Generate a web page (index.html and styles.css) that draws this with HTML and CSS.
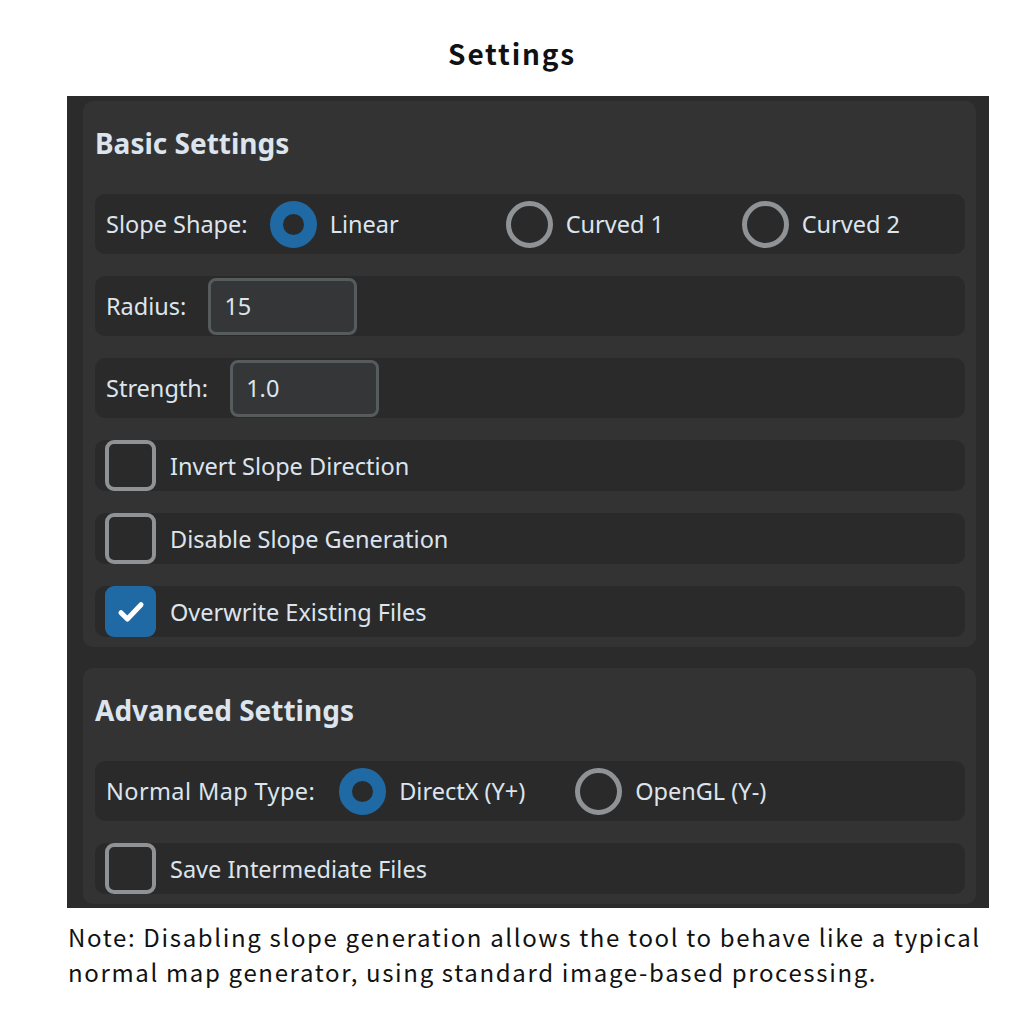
FILE: index.html
```html
<!DOCTYPE html>
<html lang="en">
<head>
<meta charset="UTF-8" />
<title>Settings</title>
<link rel="stylesheet" href="styles.css">
</head>
<body>
<h1 class="page-title">Settings</h1>

<div class="panel">
  <section class="group">
    <h2 class="group-title">Basic Settings</h2>

    <div class="row row-tall">
      <span class="label">Slope Shape:</span>
      <label class="radio checked"><span class="dot"></span>Linear</label>
      <label class="radio"><span class="dot"></span>Curved 1</label>
      <label class="radio"><span class="dot"></span>Curved 2</label>
    </div>

    <div class="row row-tall">
      <span class="label">Radius:</span>
      <div class="entry">15</div>
    </div>

    <div class="row row-tall">
      <span class="label">Strength:</span>
      <div class="entry">1.0</div>
    </div>

    <div class="row row-check">
      <span class="box"></span>
      <span class="label">Invert Slope Direction</span>
    </div>

    <div class="row row-check">
      <span class="box"></span>
      <span class="label">Disable Slope Generation</span>
    </div>

    <div class="row row-check">
      <span class="box checked">
        <svg viewBox="0 0 24 24" width="32" height="32"><path d="M4.5 12.5l4.8 4.8L19.5 6.5" fill="none" stroke="#fff" stroke-width="3.8" stroke-linecap="round" stroke-linejoin="round"/></svg>
      </span>
      <span class="label">Overwrite Existing Files</span>
    </div>
  </section>

  <section class="group">
    <h2 class="group-title">Advanced Settings</h2>

    <div class="row row-tall">
      <span class="label label-wide">Normal Map Type:</span>
      <label class="radio checked"><span class="dot"></span>DirectX (Y+)</label>
      <label class="radio"><span class="dot"></span>OpenGL (Y-)</label>
    </div>

    <div class="row row-check">
      <span class="box"></span>
      <span class="label">Save Intermediate Files</span>
    </div>
  </section>
</div>

<p class="note">Note: Disabling slope generation allows the tool to behave like a typical normal map generator, using standard image-based processing.</p>
</body>
</html>
```

FILE: styles.css
```css
/* Reset & base */
* {
  box-sizing: border-box;
}
body {
  margin: 0;
  background: #fff;
  color: #111;
  font-family: "Noto Sans CJK JP", "Noto Sans", sans-serif;
}

.page-title {
  margin: 0;
  height: 96px;
  padding-top: 33px;
  text-align: center;
  font-size: 28px;
  line-height: 40px;
  font-weight: 700;
  letter-spacing: 1.8px;
}

/* dark window */
.panel {
  margin-left: 67px;
  width: 922px;
  height: 812px;
  overflow: hidden;
  padding: 5px 13px 0 16px;
  background: #2b2b2b;
  font-family: "Noto Sans", sans-serif;
  color: #dce4ee;
}
.group {
  background: #333333;
  border-radius: 10px;
  padding: 0 11px 10px 12px;
  margin-bottom: 21px;
}
.group-title {
  margin: 0 0 31px 0;
  padding-top: 22px;
  font-size: 28px;
  line-height: 40px;
  font-weight: 700;
}

.row {
  display: flex;
  align-items: center;
  background: #2a2a2a;
  border-radius: 10px;
  padding-left: 11px;
  margin-top: 22px;
  font-size: 23.5px;
  white-space: nowrap;
}
.group-title + .row {
  margin-top: 0;
}
.row-tall {
  height: 60px;
}
.row-check {
  height: 51px;
}
.row .label {
  flex: none;
  margin-right: 22px;
}
.row .label-wide {
  letter-spacing: 0.4px;
  margin-right: 24px;
}
.row-check .label {
  margin-left: 14px;
}

/* radio buttons */
.radio {
  display: flex;
  align-items: center;
  width: 236px;
  flex: none;
}
.dot {
  width: 47px;
  height: 47px;
  flex: none;
  border-radius: 50%;
  border: 5px solid #8f9396;
  margin-right: 13px;
}
.radio.checked .dot {
  border: 13px solid #1f6aa5;
}

/* text entries */
.entry {
  width: 149px;
  height: 57px;
  flex: none;
  border: 3px solid #565b5e;
  border-radius: 8px;
  background: #343638;
  padding-left: 13px;
  line-height: 50px;
}

/* checkboxes */
.box {
  width: 51px;
  height: 51px;
  flex: none;
  margin-left: -1px;
  border: 4px solid #8f9396;
  border-radius: 9px;
  display: flex;
  align-items: center;
  justify-content: center;
}
.box.checked {
  background: #1f6aa5;
  border-color: #1f6aa5;
}

.note {
  margin: 11px 0 0 68px;
  width: 940px;
  font-size: 24px;
  line-height: 35px;
  letter-spacing: 1.65px;
  color: #111;
}
```
